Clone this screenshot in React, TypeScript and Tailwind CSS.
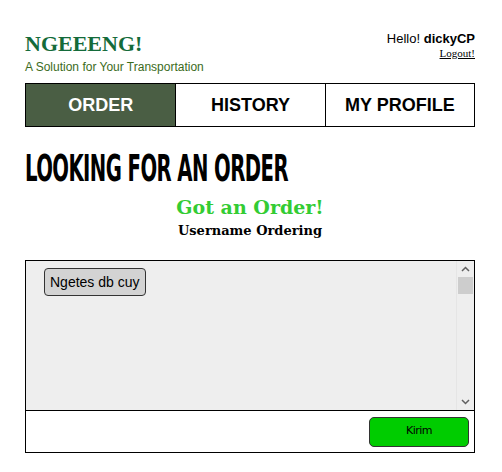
import { useState } from 'react';

export default function App() {
  const [tab] = useState('order');
  const tabs = [
    { id: 'order', label: 'ORDER' },
    { id: 'history', label: 'HISTORY' },
    { id: 'profile', label: 'MY PROFILE' },
  ];

  return (
    <div className="w-[502px] h-[472px] bg-white font-['Liberation_Sans',Arial,sans-serif] text-black">
      <div className="w-[450px] ml-[25px] pt-[32px]">
        {/* Header */}
        <div className="flex justify-between items-start h-[51px]">
          <div>
            <h1 className="font-['Liberation_Serif',serif] font-bold text-[22px] leading-[24px] text-[#146b3a]">
              NGEEENG!
            </h1>
            <p className="text-[12px] leading-[14px] mt-[4px] text-[#3b6b1c]">
              A Solution for Your Transportation
            </p>
          </div>
          <div className="text-right">
            <div className="text-[13px] leading-[14px]">
              Hello! <b>dickyCP</b>
            </div>
            <a href="#" className="block font-['Liberation_Serif',serif] text-[11px] leading-[13px] underline mt-[1px]">
              Logout!
            </a>
          </div>
        </div>

        {/* Nav */}
        <div className="grid grid-cols-3 border-[1.5px] border-black h-[44px]">
          {tabs.map((t, i) => (
            <div
              key={t.id}
              className={`flex items-center justify-center font-bold text-[18px] ${
                i > 0 ? 'border-l-[1.5px] border-black' : ''
              } ${tab === t.id ? 'bg-[#4a5e44] text-white' : 'bg-white text-black'}`}
            >
              {t.label}
            </div>
          ))}
        </div>

        {/* Title */}
        <h2 className="mt-[25px] h-[32px] font-['DejaVu_Sans_Condensed','DejaVu_Sans',sans-serif] font-bold text-[38px] leading-[32px] tracking-[-1px] origin-left scale-x-[0.575] whitespace-nowrap">
          LOOKING FOR AN ORDER
        </h2>
        <div className="text-center font-['DejaVu_Serif',serif]">
          <div className="mt-[11px] text-[19px] leading-[24px] font-bold text-[#33cc33]">Got an Order!</div>
          <div className="mt-[3px] text-[13px] leading-[18px] font-bold">Username Ordering</div>
        </div>

        {/* Chat box */}
        <div className="mt-[20px] border border-black h-[193px] flex flex-col">
          <div className="flex h-[150px] bg-[#eeeeee] border-b border-black">
            <div className="flex-1 pl-[18px] pt-[7px]">
              <div className="inline-block bg-[#d3d3d3] border border-[#333] rounded-[4px] px-[5px] py-[4px] text-[14px] leading-[18px]">
                Ngetes db cuy
              </div>
            </div>
            <div className="w-[17px] flex flex-col items-center border-l border-[#e5e5e5] mr-[1px]">
              <svg width="9" height="6" viewBox="0 0 9 6" className="mt-[5px]">
                <path d="M1 5 L4.5 1.5 L8 5" stroke="#606060" strokeWidth="1.5" fill="none" />
              </svg>
              <div className="mt-[5px] w-[15px] h-[17px] bg-[#cdcdcd]" />
              <div className="flex-1" />
              <svg width="9" height="6" viewBox="0 0 9 6" className="mb-[5px]">
                <path d="M1 1 L4.5 4.5 L8 1" stroke="#606060" strokeWidth="1.5" fill="none" />
              </svg>
            </div>
          </div>
          <div className="flex-1 flex items-center justify-end pr-[5px]">
            <button className="w-[100px] h-[30px] bg-[#00cc00] border border-[#333] rounded-[5px] text-[11px] font-['DejaVu_Sans',sans-serif] tracking-[-0.5px]">
              Kirim
            </button>
          </div>
        </div>
      </div>
    </div>
  );
}
